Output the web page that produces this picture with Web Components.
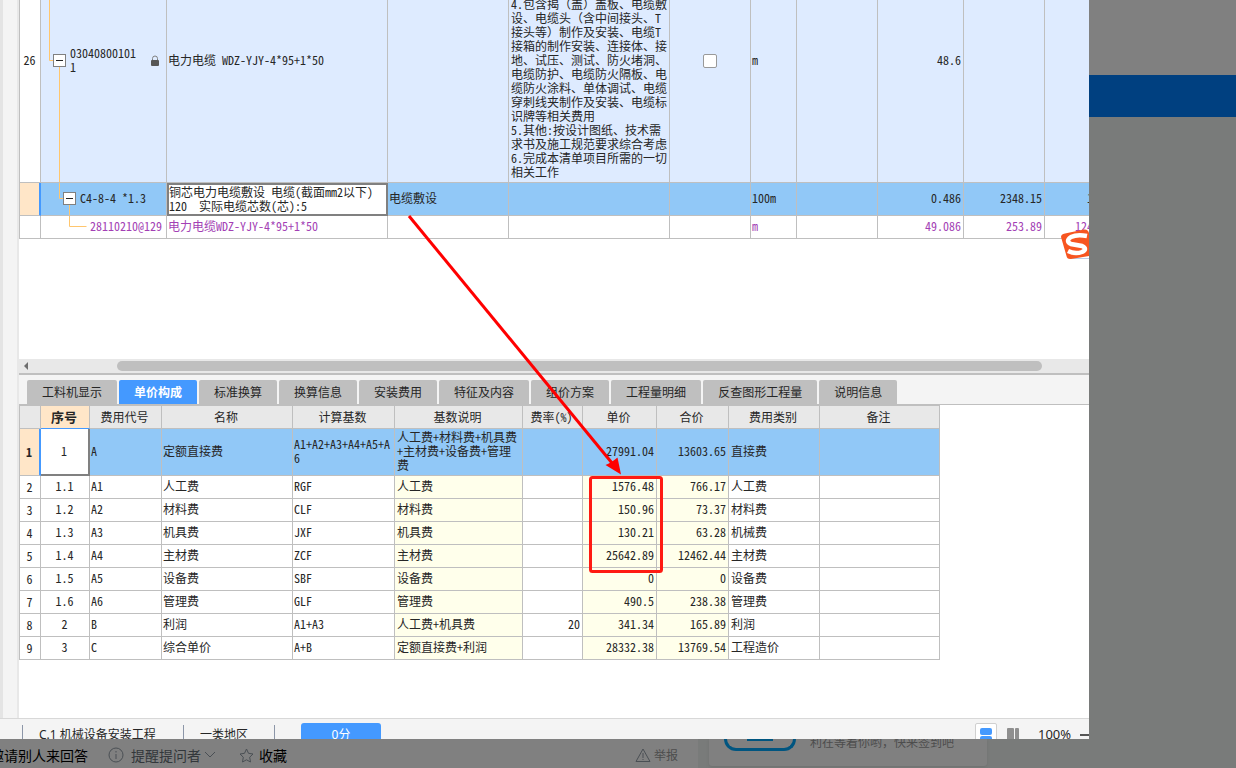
<!DOCTYPE html>
<html lang="zh-CN">
<head>
<meta charset="utf-8">
<title>单价构成</title>
<style>
html, body { margin: 0; height: 100%; }
body { font-family: "Noto Sans CJK SC", sans-serif; color: #262626; background: #797b7a; overflow: hidden; }
</style>
</head>
<body>
<desk-page></desk-page>
<script>
class Base extends HTMLElement {
  constructor() {
    super();
    this.attachShadow({ mode: 'open' }).innerHTML = this.view();
  }
}

const gridCss = `
  * { box-sizing: border-box; }
  table { border-collapse: separate; border-spacing: 0; table-layout: fixed; font-size: 12px; line-height: 14px;
    font-feature-settings: "hwid" 1; border-left: 1px solid #bfbfbf; }
  th, td { border-right: 1px solid #bfbfbf; border-bottom: 1px solid #bfbfbf; font-weight: 400; text-align: left; overflow: hidden; }
  th { padding: 0 1px 1px 0; }
  td { padding: 0 2px 2px 1px; }
  .n { text-align: right; }
  .c, thead th { text-align: center; }
  .hot { background: #ffe6c8; }
  .sel td { background: #91c8f7; }
`;

customElements.define('bill-table', class extends Base {
  view() {
    const cols = [21, 126, 221, 121, 161, 81, 46, 81, 86, 81, 81];
    return `<style>${gridCss}
      :host { display: flex; flex-direction: column; justify-content: flex-end; align-items: flex-start; overflow: hidden; height: 239px; flex: none; }
      table { width: ${cols.reduce((a, b) => a + b, 1)}px; flex: none; }
      .bill { height: 244px; }
      .bill td { background: #deebff; }
      .bill .desc { vertical-align: bottom; padding: 0 0 3px 2px; white-space: nowrap; }
      .desc span { font-feature-settings: normal; }
      .sel { height: 33px; }
      .mat { height: 23px; }
      .mat td { color: #a33fb5; }
      td.tree { padding: 0; }
      .tree div { display: flex; align-items: center; }
      .tree svg { flex: none; display: block; }
      .tree .code { flex: 1; padding-bottom: 2px; }
      .hot { border-right: 2px solid #4499ff; }
      .sel td.edit { background: #fff; outline: 2px solid #808080; outline-offset: -2px; padding: 2px 0 0 2px; vertical-align: top; white-space: nowrap; }
      input { appearance: none; display: block; width: 14px; height: 14px; margin: 0 auto; border: 1px solid #999; border-radius: 2px; background: #fff; }
      .box { padding: 0; }
    </style>
    <table><colgroup>${cols.map(w => `<col style="width:${w}px">`).join('')}</colgroup><tbody>
      <tr class="bill"><th scope="row" class="c">26</th>
        <td class="tree"><div>
          <svg width="29" height="243" fill="none" stroke="#ffc66e"><path d="M8.500 0v121.500h4M18.500 128v115"/><rect x="12.500" y="115.500" width="12" height="12" fill="#fff" stroke="#808080"/><path d="M15 121.500h7" stroke="#262626"/></svg>
          <span class="code">03040800101<br>1</span>
          <svg width="17" height="12"><path d="M3.500 6V3.500a2.500 2.500 0 0 1 5 0V6" fill="none" stroke="#808080"/><rect x="2" y="5" width="8" height="6" rx="1" fill="#555"/></svg></div></td>
        <td>电力电缆 WDZ-YJY-4*95+1*50</td><td></td>
        <td class="desc">4.包含揭<span>（</span>盖<span>）</span>盖板、电缆敷<br>设、电缆头<span>（</span>含中间接头、T<br>接头等<span>）</span>制作及安装、电缆T<br>接箱的制作安装、连接体、接<br>地、试压、测试、防火堵洞、<br>电缆防护、电缆防火隔板、电<br>缆防火涂料、单体调试、电缆<br>穿刺线夹制作及安装、电缆标<br>识牌等相关费用<br>5.其他:按设计图纸、技术需<br>求书及施工规范要求综合考虑<br>6.完成本清单项目所需的一切<br>相关工作</td>
        <td class="box"><input type="checkbox" aria-label="主要清单"></td><td>m</td><td></td><td class="n">48.6</td><td></td><td></td></tr>
      <tr class="sel"><th class="hot"></th>
        <td class="tree"><div>
          <svg width="39" height="32" fill="none" stroke="#ffc66e"><path d="M18.500 0v15.500h4M28.500 22v10"/><rect x="22.500" y="9.500" width="12" height="12" fill="#fff" stroke="#808080"/><path d="M25 15.500h7" stroke="#262626"/></svg>
          <span class="code">C4-8-4 *1.3</span></div></td>
        <td class="edit">铜芯电力电缆敷设 电缆(截面mm2以下)<br>120&nbsp; 实际电缆芯数(芯):5</td>
        <td>电缆敷设</td><td></td><td></td><td>100m</td><td></td><td class="n">0.486</td><td class="n">2348.15</td><td class="n">141.20</td></tr>
      <tr class="mat"><th></th>
        <td class="tree"><div>
          <svg width="49" height="22" fill="none" stroke="#ffc66e"><path d="M28.500 0v10.500h17"/></svg>
          <span class="code">28110210@129</span></div></td>
        <td>电力电缆WDZ-YJY-4*95+1*50</td><td></td><td></td><td></td><td>m</td><td></td><td class="n">49.086</td><td class="n">253.89</td><td class="n">12462.44</td></tr>
    </tbody></table>`;
  }
});

customElements.define('h-scroll', class extends Base {
  view() {
    return `<style>
      :host { display: grid; grid-template-columns: 98px 1fr 47px; align-items: center; height: 14px; flex: none; background: #e8e8e8; border-bottom: 2px solid #bfbfbf; }
      i { height: 10px; border-radius: 5px; background: #bfbfbf; }
      svg { display: block; }
    </style><svg width="12" height="10"><path d="M9 1v8L5 5z" fill="#6e6e6e"/></svg><i></i>`;
  }
});

customElements.define('tab-item', class extends Base {
  view() {
    return `<style>
      :host { display: block; }
      button { display: block; height: 25px; padding: 0 15px 2px; border: 0; border-radius: 2px 2px 0 0; background: #bfbfbf; color: #262626; font: 12px/23px "Noto Sans CJK SC", sans-serif; white-space: nowrap; }
      :host([active]) button { background: #4499ff; color: #fff; font-weight: 700; height: 24px; padding-bottom: 1px; }
    </style><button type="button"><slot></slot></button>`;
  }
});

customElements.define('tab-bar', class extends Base {
  view() {
    return `<style>
      :host { display: flex; gap: 2px; align-items: flex-start; height: 24px; flex: none; padding: 5px 0 0 8px; background: #f4f4f4; border-bottom: 1px solid #bfbfbf; }
    </style>` + ['工料机显示', '单价构成', '标准换算', '换算信息', '安装费用', '特征及内容', '组价方案', '工程量明细', '反查图形工程量', '说明信息']
      .map((t, i) => `<tab-item${i === 1 ? ' active' : ''}>${t}</tab-item>`).join('');
  }
});

customElements.define('price-table', class extends Base {
  view() {
    const cols = [21, 49, 72, 131, 102, 128, 60, 74, 72, 91, 120];
    const heads = ['', '序号', '费用代号', '名称', '计算基数', '基数说明', '费率(%)', '单价', '合价', '费用类别', '备注'];
    const rows = [
      ['1', 'A', '定额直接费', 'A1+A2+A3+A4+A5+A<br>6', '人工费+材料费+机具费<br>+主材费+设备费+管理<br>费', '', '27991.04', '13603.65', '直接费'],
      ['1.1', 'A1', '人工费', 'RGF', '人工费', '', '1576.48', '766.17', '人工费'],
      ['1.2', 'A2', '材料费', 'CLF', '材料费', '', '150.96', '73.37', '材料费'],
      ['1.3', 'A3', '机具费', 'JXF', '机具费', '', '130.21', '63.28', '机械费'],
      ['1.4', 'A4', '主材费', 'ZCF', '主材费', '', '25642.89', '12462.44', '主材费'],
      ['1.5', 'A5', '设备费', 'SBF', '设备费', '', '0', '0', '设备费'],
      ['1.6', 'A6', '管理费', 'GLF', '管理费', '', '490.5', '238.38', '管理费'],
      ['2', 'B', '利润', 'A1+A3', '人工费+机具费', '20', '341.34', '165.89', '利润'],
      ['3', 'C', '综合单价', 'A+B', '定额直接费+利润', '', '28332.38', '13769.54', '工程造价']];
    const cls = ['c', '', '', '', 'y', 'n', 'n y', 'n y', 'k'];
    return `<style>${gridCss}
      :host { display: block; flex: none; overflow: hidden; }
      table { width: ${cols.reduce((a, b) => a + b, 1)}px; border-top: 1px solid #bfbfbf; }
      tr { height: 23px; }
      tr.sel { height: 47px; }
      td { white-space: nowrap; }
      .y, .k { padding-left: 2px; }
      thead th { background: #e8e8e8; padding: 0 2px 0 0; }
      thead th.hot, .sel th.hot { background: #ffe6c8; font-weight: 700; }
      thead th.hot { font-size: 13px; border-bottom: 1px solid #4499ff; }
      .y { background: #ffffeb; }
      .sel td:first-of-type { background: #fff; border-right: 2px solid #808080; border-bottom: 2px solid #808080; padding-bottom: 1px; }
      .sel th.hot { border-right: 2px solid #4499ff; }
    </style>
    <table><colgroup>${cols.map(w => `<col style="width:${w}px">`).join('')}</colgroup>
    <thead><tr>${heads.map((h, i) => `<th scope="col"${i === 1 ? ' class="hot"' : ''}>${h}</th>`).join('')}</tr></thead>
    <tbody>${rows.map((r, i) => `<tr${i ? '' : ' class="sel"'}><th scope="row" class="c${i ? '' : ' hot'}">${i + 1}</th>${r.map((v, k) => `<td class="${cls[k]}">${v}</td>`).join('')}<td></td></tr>`).join('')}</tbody></table>`;
  }
});

customElements.define('status-bar', class extends Base {
  view() {
    return `<style>
      :host { display: flex; align-items: flex-start; height: 20px; flex: none; overflow: hidden; border-top: 1px solid #d8d8d8; background: #f4f4f4; font: 12px/20px "Noto Sans", "Noto Sans CJK SC", sans-serif; padding-left: 22px; white-space: nowrap; }
      span { margin-top: 6px; border-left: 1px solid #8c96a8; padding: 0 16px; height: 20px; }
      .a { width: 128px; } .b { width: 58px; } .e { padding: 0 13px; }
      button { border: 0; padding: 0; flex: none; }
      .score { width: 80px; height: 24px; margin-top: 4px; border-radius: 3px; background: #4499ff; color: #fff; font: 12px/22px "Noto Sans", "Noto Sans CJK SC", sans-serif; }
      .view { width: 22px; height: 22px; margin-top: 4px; background: none; }
      .on { margin-left: auto; background: #fff; border: 1px solid #d0d0d0; border-radius: 2px; }
      .cols { margin: 4px 14px 0 5px; }
      svg { display: block; }
      b { font: 13px/18px "Noto Sans", sans-serif; margin-top: 6px; width: 42px; flex: none; }
      .minus { width: 9px; height: 2px; margin-top: 15px; background: #555; flex: none; }
    </style>
    <span class="a">C.1 机械设备安装工程</span><span class="b">一类地区</span><span class="e"></span>
    <button type="button" class="score">0分</button>
    <button type="button" class="view on" aria-label="上下视图"><svg width="20" height="20"><g fill="#4499ff"><rect x="4" y="4" width="12" height="7" rx="2"/><rect x="4" y="12" width="12" height="7" rx="2"/></g></svg></button>
    <button type="button" class="view cols" aria-label="左右视图"><svg width="22" height="22"><g fill="#8f8f8f"><rect x="5" y="5" width="7" height="14" rx="1"/><rect x="13" y="5" width="4" height="14" rx="1"/></g></svg></button>
    <b>100%</b><i class="minus"></i>`;
  }
});

customElements.define('mark-layer', class extends Base {
  view() {
    return `<style>:host { position: absolute; inset: 0; pointer-events: none; overflow: hidden; } svg { display: block; }</style>
    <svg width="1089" height="739">
      <path d="M409 216L612 463" stroke="#f00" stroke-width="3"/>
      <path d="M621 474.500L605.500 465Q611 463 617.500 457.500z" fill="#f00"/>
      <rect x="590.500" y="477.500" width="71" height="94" rx="2" fill="none" stroke="#ff1a12" stroke-width="3"/>
      <g transform="translate(1061 229)"><path d="M29 29.500h-20" stroke="#b9cdea"/>
        <path d="M4 4.500L23 .500Q27 0 28 4L32 23Q32 26 28 27L10 30Q6 30.500 5.500 27L0 8Q0 5 4 4.500z" fill="#f75520"/>
        <path d="M26 7Q16 5 10 8Q4 12 10 15L21 17Q27 20 21 23Q14 25.500 7 22" fill="none" stroke="#fff" stroke-width="4.500"/></g>
    </svg>`;
  }
});

customElements.define('app-window', class extends Base {
  view() {
    return `<style>
      :host { position: relative; display: flex; flex-direction: column; background: #fff; overflow: hidden; min-width: 0; }
      .body { display: grid; grid-template-columns: 19px minmax(0, 1fr); flex: 1; min-height: 0; }
      .rail { box-sizing: border-box; background: #f4f4f4; border-left: 3px solid #e4e4e4; border-right: 2px solid #e8e8e8; }
      .main { display: flex; flex-direction: column; min-width: 0; }
      .space { flex: 0 0 120px; }
    </style>
    <div class="body"><div class="rail"></div><div class="main">
      <bill-table></bill-table><div class="space"></div><h-scroll></h-scroll><tab-bar></tab-bar><price-table></price-table>
    </div></div>
    <status-bar></status-bar><mark-layer></mark-layer>`;
  }
});

customElements.define('page-strip', class extends Base {
  view() {
    return `<style>
      :host { display: flex; flex-direction: column; background: #797b7a; }
      .top { height: 75px; background: #808080; } .nav { height: 42px; background: #004080; }
    </style><div class="top"></div><div class="nav"></div>`;
  }
});

customElements.define('answer-bar', class extends Base {
  view() {
    return `<style>
      * { box-sizing: border-box; }
      :host { display: flex; align-items: flex-start; gap: 11px; height: 29px; overflow: hidden; background: #797b7a; font-size: 14px; line-height: 20px; white-space: nowrap; }
      .ops { flex: 0 0 698px; height: 29px; display: flex; align-items: center; padding: 3px 20px 0 0; background: #808080; }
      a { color: #1a1a1a; text-decoration: none; display: flex; align-items: center; }
      .ask { width: 88px; justify-content: flex-end; overflow: hidden; margin-right: 20px; color: #000; flex: none; }
      .tip { color: #33373b; gap: 7px; margin-right: 24px; }
      .tip svg + span { margin-right: -3px; }
      .fav { gap: 5px; color: #000; }
      .rep { margin-left: auto; font-size: 12px; color: #4d4d4d; gap: 3px; }
      .card { flex: 0 0 278px; height: 27px; display: flex; align-items: flex-start; background: #808080; padding-left: 15px; border-radius: 0 0 3px 3px; box-shadow: 0 1px 3px #6f7170; }
      .sign { width: 72px; height: 12px; border: 3px solid #005580; border-top: 0; border-radius: 0 0 12px 12px; margin-right: 14px; }
      .sign::before { content: ""; display: block; width: 26px; height: 2px; margin: 0 auto; background: #005580; }
      .msg { font-size: 12px; line-height: 20px; color: #4d4d4d; height: 20px; margin-top: -7px; }
      svg { display: block; fill: none; stroke: #4a4f54; }
    </style>
    <div class="ops">
      <a class="ask" href="#">邀请别人来回答</a>
      <a class="tip" href="#"><svg width="16" height="16"><circle cx="8" cy="8" r="7"/><path d="M8 7v5M8 4v1.500"/></svg><span>提醒提问者</span><svg width="10" height="8"><path d="M0 1l5 5 5-5"/></svg></a>
      <a class="fav" href="#"><svg width="15" height="15"><path d="M7.500 1l2 4.300 4.500.700-3.300 3.200.800 4.800-4-2.200-4 2.200.800-4.800L1 6l4.500-.700z"/></svg>收藏</a>
      <a class="rep" href="#"><svg width="16" height="15"><path d="M8 1L1 13.500h14zM8 5v5M8 11v1"/></svg>举报</a>
    </div>
    <div class="card"><div class="sign"></div><span class="msg">利在等着你哟，快来签到吧</span></div>`;
  }
});

customElements.define('desk-page', class extends Base {
  view() {
    return `<style>
      :host { display: grid; grid-template-columns: minmax(0, 1fr) 147px; grid-template-rows: minmax(0, 1fr) 29px; height: 100vh; }
      answer-bar { grid-column: 1 / -1; }
    </style><app-window></app-window><page-strip></page-strip><answer-bar></answer-bar>`;
  }
});
</script>
</body>
</html>
